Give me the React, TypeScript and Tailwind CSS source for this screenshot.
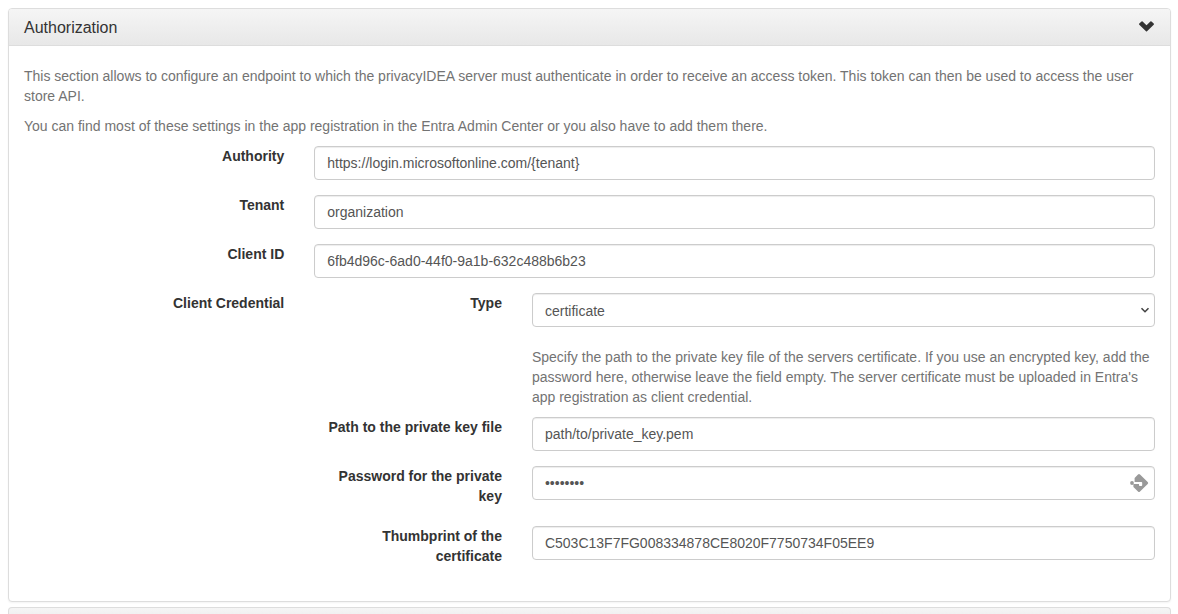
import { useState, type ReactNode } from "react";

const controlBase =
  "block h-[34px] w-full rounded-sm border border-[#ccc] bg-white text-sm leading-5 text-[#555] shadow-[inset_0_1px_1px_rgba(0,0,0,0.075)] outline-none focus:border-[#66afe9]";
const textControl = `${controlBase} px-3 py-1.5`;
const selectControl = `${controlBase} appearance-none px-3 pt-[7px] pb-[5px]`;

type FieldProps = {
  id: string;
  label: string;
  children: ReactNode;
};

function Field({ id, label, children }: FieldProps) {
  return (
    <div className="-mx-[15px] mb-[15px] grid grid-cols-4">
      <label
        htmlFor={id}
        className="mb-[5px] px-[15px] text-right text-sm leading-5 font-bold text-[#333]"
      >
        {label}
      </label>
      <div className="col-span-3 px-[15px]">{children}</div>
    </div>
  );
}

function ChevronDown() {
  return (
    <svg width="16" height="16" viewBox="0 0 16 16" aria-hidden="true">
      <path
        d="M2.500 1.400a.8.8 0 0 1 1.100 0L7.500 5.300l3.900-3.900a.8.8 0 0 1 1.100 0l2.200 2.200a.8.8 0 0 1 0 1.100L8 11.300a.7.7 0 0 1-1 0L.300 4.700a.8.8 0 0 1 0-1.100z"
        fill="#333"
      />
    </svg>
  );
}

function SelectArrow() {
  return (
    <svg width="10" height="10" viewBox="0 0 10 10" aria-hidden="true">
      <path
        d="M1.500 3.200L5 6.700l3.500-3.500"
        fill="none"
        stroke="#444"
        strokeWidth="1.600"
      />
    </svg>
  );
}

function PasswordManagerIcon() {
  return (
    <svg width="20" height="20" viewBox="0 0 20 20" aria-hidden="true">
      <path
        d="M9 1.500a1.400 1.400 0 0 1 2 0l7.700 7.500a1.400 1.400 0 0 1 0 2L11 18.500a1.400 1.400 0 0 1-2 0L4.400 13.900V11h5.600v1.200q0 .8.8.8h1.600q.8 0 .8-.8V9.700q0-.8-.8-.8H5.600V5z"
        fill="#999"
      />
      <circle cx="3" cy="10" r="1.900" fill="#999" />
    </svg>
  );
}

export default function App() {
  const [open, setOpen] = useState(true);

  return (
    <main className="flex min-h-screen flex-col gap-[5px] bg-white pt-2 pr-[7px] pl-2 font-['Liberation_Sans',Arial,sans-serif] text-sm leading-5 text-[#333]">
      <section className="rounded-sm border border-[#ddd] bg-white shadow-[0_1px_2px_rgba(0,0,0,0.05)]">
        <h4>
          <button
            type="button"
            aria-expanded={open}
            onClick={() => setOpen(!open)}
            className="flex w-full items-center justify-between rounded-t-[3px] border-b border-[#ddd] bg-linear-to-b from-[#f5f5f5] to-[#e8e8e8] px-[15px] pt-[9px] pb-[7px] text-left text-base leading-5"
          >
            <span>Authorization</span>
            <ChevronDown />
          </button>
        </h4>
        {open && (
          <div className="p-[15px]">
            <p className="mt-[5px] mb-2.5 text-[#737373]">
              This section allows to configure an endpoint to which the
              privacyIDEA server must authenticate in order to receive an access
              token. This token can then be used to access the user store API.
            </p>
            <p className="mb-2.5 text-[#737373]">
              You can find most of these settings in the app registration in the
              Entra Admin Center or you also have to add them there.
            </p>

            <Field id="authority" label="Authority">
              <input
                id="authority"
                type="text"
                defaultValue="https://login.microsoftonline.com/{tenant}"
                className={textControl}
              />
            </Field>
            <Field id="tenant" label="Tenant">
              <input
                id="tenant"
                type="text"
                defaultValue="organization"
                className={textControl}
              />
            </Field>
            <Field id="client-id" label="Client ID">
              <input
                id="client-id"
                type="text"
                defaultValue="6fb4d96c-6ad0-44f0-9a1b-632c488b6b23"
                className={textControl}
              />
            </Field>

            <div
              role="group"
              aria-labelledby="client-credential"
              className="-mx-[15px] grid grid-cols-4"
            >
              <div
                id="client-credential"
                className="px-[15px] text-right font-bold"
              >
                Client Credential
              </div>
              <div className="col-span-3 px-[15px]">
                <Field id="type" label="Type">
                  <div className="relative">
                    <select
                      id="type"
                      defaultValue="certificate"
                      className={selectControl}
                    >
                      <option value="secret">secret</option>
                      <option value="certificate">certificate</option>
                    </select>
                    <span className="pointer-events-none absolute inset-y-0 right-[5px] flex items-center">
                      <SelectArrow />
                    </span>
                  </div>
                </Field>
                <div className="-mx-[15px] grid grid-cols-4">
                  <p className="col-span-3 col-start-2 mt-[5px] mb-2.5 px-[15px] text-[#737373]">
                    Specify the path to the private key file of the servers
                    certificate. If you use an encrypted key, add the password
                    here, otherwise leave the field empty. The server
                    certificate must be uploaded in Entra's app registration as
                    client credential.
                  </p>
                </div>
                <Field id="key-file" label="Path to the private key file">
                  <input
                    id="key-file"
                    type="text"
                    defaultValue="path/to/private_key.pem"
                    className={textControl}
                  />
                </Field>
                <Field id="key-password" label="Password for the private key">
                  <div className="relative">
                    <input
                      id="key-password"
                      type="password"
                      defaultValue="password"
                      className={textControl}
                    />
                    <button
                      type="button"
                      aria-label="Fill password"
                      className="absolute inset-y-0 right-1.5 flex items-center"
                    >
                      <PasswordManagerIcon />
                    </button>
                  </div>
                </Field>
                <Field id="thumbprint" label="Thumbprint of the certificate">
                  <input
                    id="thumbprint"
                    type="text"
                    defaultValue="C503C13F7FG008334878CE8020F7750734F05EE9"
                    className={textControl}
                  />
                </Field>
              </div>
            </div>
          </div>
        )}
      </section>
      <section className="flex-1 rounded-t-sm border border-b-0 border-[#ddd] bg-linear-to-b from-[#f5f5f5] to-[#f1f1f1]" />
    </main>
  );
}
